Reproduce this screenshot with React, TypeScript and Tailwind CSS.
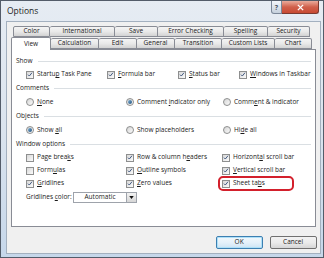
import React from "react";

const F = { fontFamily: '"Open Sans", "Noto Sans", sans-serif' };

function Check({ checked }: { checked?: boolean }) {
  return (
    <span className="w-[8px] h-[8px] shrink-0 border border-[#8e8f8f] bg-gradient-to-br from-[#d8d8d8] to-[#fbfbfb] flex items-center justify-center">
      {checked && (
        <svg viewBox="0 0 8 8" className="w-[7px] h-[7px]">
          <path d="M1.3 4.2 L3.1 6 L6.7 1.6" stroke="#3e557e" strokeWidth="1.3" fill="none" />
        </svg>
      )}
    </span>
  );
}

function Radio({ checked }: { checked?: boolean }) {
  return (
    <span className="w-[8px] h-[8px] shrink-0 rounded-full border border-[#8e8f8f] bg-gradient-to-br from-[#d4d4d4] to-[#fcfcfc] flex items-center justify-center">
      {checked && <span className="w-[4px] h-[4px] rounded-full bg-gradient-to-br from-[#7fb3d8] to-[#1f4f7a]" />}
    </span>
  );
}

function Item({ kind, checked, w, children }: { kind: "c" | "r"; checked?: boolean; w?: string; children: React.ReactNode }) {
  return (
    <div className={"flex items-center gap-[3px] shrink-0 " + (w ?? "")}>
      {kind === "c" ? <Check checked={checked} /> : <Radio checked={checked} />}
      <span className="whitespace-nowrap leading-none">{children}</span>
    </div>
  );
}

function Header({ label, h }: { label: string; h: string }) {
  return (
    <div className={"flex items-center gap-[5px] " + h}>
      <span className="whitespace-nowrap leading-none">{label}</span>
      <div className="flex-1 h-px bg-[#dadfe3]" />
    </div>
  );
}

const row1 = [
  ["Color", "w-[37px]"],
  ["International", "w-[65px]"],
  ["Save", "w-[43px]"],
  ["Error Checking", "w-[66px]"],
  ["Spelling", "w-[44px]"],
  ["Security", "w-[42px]"],
];
const row2 = [
  ["Calculation", "w-[48px]"],
  ["Edit", "w-[38px]"],
  ["General", "w-[38px]"],
  ["Transition", "w-[47px]"],
  ["Custom Lists", "w-[53px]"],
  ["Chart", "w-[37px]"],
];

const tabCls =
  "h-full shrink-0 flex items-center justify-center border border-[#898c95] border-l-0 first:border-l rounded-t-[2px] bg-gradient-to-b from-[#f4f4f4] via-[#e9e9e9] to-[#d3d3d3] leading-none";

export default function App() {
  return (
    <div
      className="w-[324px] h-[258px] border border-[#535c69] bg-gradient-to-b from-[#e6ecf3] via-[#dbe4ee] to-[#c6d7ea] flex flex-col text-[6.5px] text-[#1b1b1b]"
      style={F}
    >
      {/* title bar */}
      <div className="h-[20px] flex items-start justify-between pr-[4px] shrink-0">
        <div className="pl-[6px] pt-[6px] text-[8.5px] leading-none text-[#1e1e1e]">Options</div>
        <div className="flex">
          <div className="w-[11px] h-[13px] border border-[#7b8798] border-t-0 rounded-bl-[3px] bg-gradient-to-b from-[#f3f6fa] to-[#c5d0dc] flex items-center justify-center text-[7px] font-bold text-[#4a5563] leading-none">
            ?
          </div>
          <div className="w-[37px] h-[13px] border border-[#7a3a30] border-t-0 border-l-0 rounded-br-[3px] bg-gradient-to-b from-[#e9ab9c] via-[#d0604c] to-[#c84a32] flex items-center justify-center leading-none">
            <svg viewBox="0 0 10 8" className="w-[9px] h-[7px]">
              <path d="M2 1 L8 7 M8 1 L2 7" stroke="#ffffff" strokeWidth="1.6" />
            </svg>
          </div>
        </div>
      </div>

      {/* frame body */}
      <div className="flex-1 px-[5px] pb-[3px] flex">
        <div className="flex-1 border border-[#a3b0bf] bg-[#f0f0f0] flex flex-col pt-[4px] px-[4px]">
          {/* tabs row 1 */}
          <div className="h-[11px] flex pl-[2px]">
            {row1.map(([t, w]) => (
              <div key={t} className={tabCls + " " + w}>
                {t}
              </div>
            ))}
          </div>
          {/* tabs row 2 */}
          <div className="h-[12px] flex items-end relative z-10">
            <div className="w-[40px] h-[13px] -mb-[1px] shrink-0 flex items-center justify-center border border-[#898c95] border-b-0 rounded-t-[2px] bg-white leading-none">
              View
            </div>
            <div className="h-[11px] flex">
              {row2.map(([t, w]) => (
                <div key={t} className={tabCls.replace("first:border-l", "") + " " + w}>
                  {t}
                </div>
              ))}
            </div>
          </div>

          {/* panel */}
          <div className="h-[178px] border border-[#898c95] bg-white pt-[5px] px-[4px] flex flex-col">
            <Header label="Show" h="h-[13px]" />
            <div className="h-[13px] flex items-center pl-[10px]">
              <Item kind="c" checked w="w-[81px]">
                Startu<u>p</u> Task Pane
              </Item>
              <Item kind="c" checked w="w-[71px]">
                <u>F</u>ormula bar
              </Item>
              <Item kind="c" checked w="w-[61px]">
                <u>S</u>tatus bar
              </Item>
              <Item kind="c" checked>
                <u>W</u>indows in Taskbar
              </Item>
            </div>

            <Header label="Comments" h="h-[14px]" />
            <div className="h-[14px] flex items-center pl-[10px]">
              <Item kind="r" w="w-[100px]">
                <u>N</u>one
              </Item>
              <Item kind="r" checked w="w-[97px]">
                Comment <u>i</u>ndicator only
              </Item>
              <Item kind="r">
                Comm<u>e</u>nt &amp; indicator
              </Item>
            </div>

            <Header label="Objects" h="h-[14px]" />
            <div className="h-[14px] flex items-center pl-[10px]">
              <Item kind="r" checked w="w-[100px]">
                Show <u>a</u>ll
              </Item>
              <Item kind="r" w="w-[97px]">
                Show placeholders
              </Item>
              <Item kind="r">
                Hi<u>d</u>e all
              </Item>
            </div>

            <Header label="Window options" h="h-[14px]" />
            <div className="h-[13px] flex items-center pl-[10px]">
              <Item kind="c" w="w-[100px]">
                Page brea<u>k</u>s
              </Item>
              <Item kind="c" checked w="w-[96px]">
                Row &amp; column h<u>e</u>aders
              </Item>
              <Item kind="c" checked>
                Horizont<u>a</u>l scroll bar
              </Item>
            </div>
            <div className="h-[13px] flex items-center pl-[10px]">
              <Item kind="c" w="w-[100px]">
                Form<u>u</u>las
              </Item>
              <Item kind="c" checked w="w-[96px]">
                <u>O</u>utline symbols
              </Item>
              <Item kind="c" checked>
                <u>V</u>ertical scroll bar
              </Item>
            </div>
            <div className="h-[13px] flex items-center pl-[10px]">
              <Item kind="c" checked w="w-[100px]">
                <u>G</u>ridlines
              </Item>
              <Item kind="c" checked w="w-[96px]">
                <u>Z</u>ero values
              </Item>
              <div className="relative">
                <Item kind="c" checked>
                  Sheet ta<u>b</u>s
                </Item>
                <div className="absolute left-[-4px] top-[-4px] w-[76px] h-[15px] border-2 border-[#d3202c] rounded-[5px]" />
              </div>
            </div>
            <div className="h-[14px] flex items-center pl-[10px]">
              <span className="w-[47px] whitespace-nowrap leading-none">
                Gridlines <u>c</u>olor:
              </span>
              <div className="h-[11px] flex border border-[#9ea3ab] bg-white">
                <div className="w-[52px] flex items-center justify-center leading-none">Automatic</div>
                <div className="w-[10px] border-l border-[#9ea3ab] bg-gradient-to-b from-[#f3f3f3] to-[#d6d6d6] flex items-center justify-center">
                  <svg viewBox="0 0 6 4" className="w-[5px] h-[3px]">
                    <path d="M0 0 L6 0 L3 4 Z" fill="#111" />
                  </svg>
                </div>
              </div>
            </div>
          </div>

          {/* buttons */}
          <div className="flex justify-end gap-[7px] mt-[9px] pr-[3px] -mr-[4px]">
            <div className="w-[47px] h-[13px] rounded-[2px] border border-[#3c7fb1] bg-gradient-to-b from-[#f2f8fc] via-[#e5f1fa] to-[#cde4f4] shadow-[inset_0_0_0_1px_#aee0f8] flex items-center justify-center leading-none">
              OK
            </div>
            <div className="w-[47px] h-[13px] rounded-[2px] border border-[#707070] bg-gradient-to-b from-[#f2f2f2] via-[#ebebeb] to-[#d6d6d6] flex items-center justify-center leading-none">
              Cancel
            </div>
          </div>
        </div>
      </div>
    </div>
  );
}
